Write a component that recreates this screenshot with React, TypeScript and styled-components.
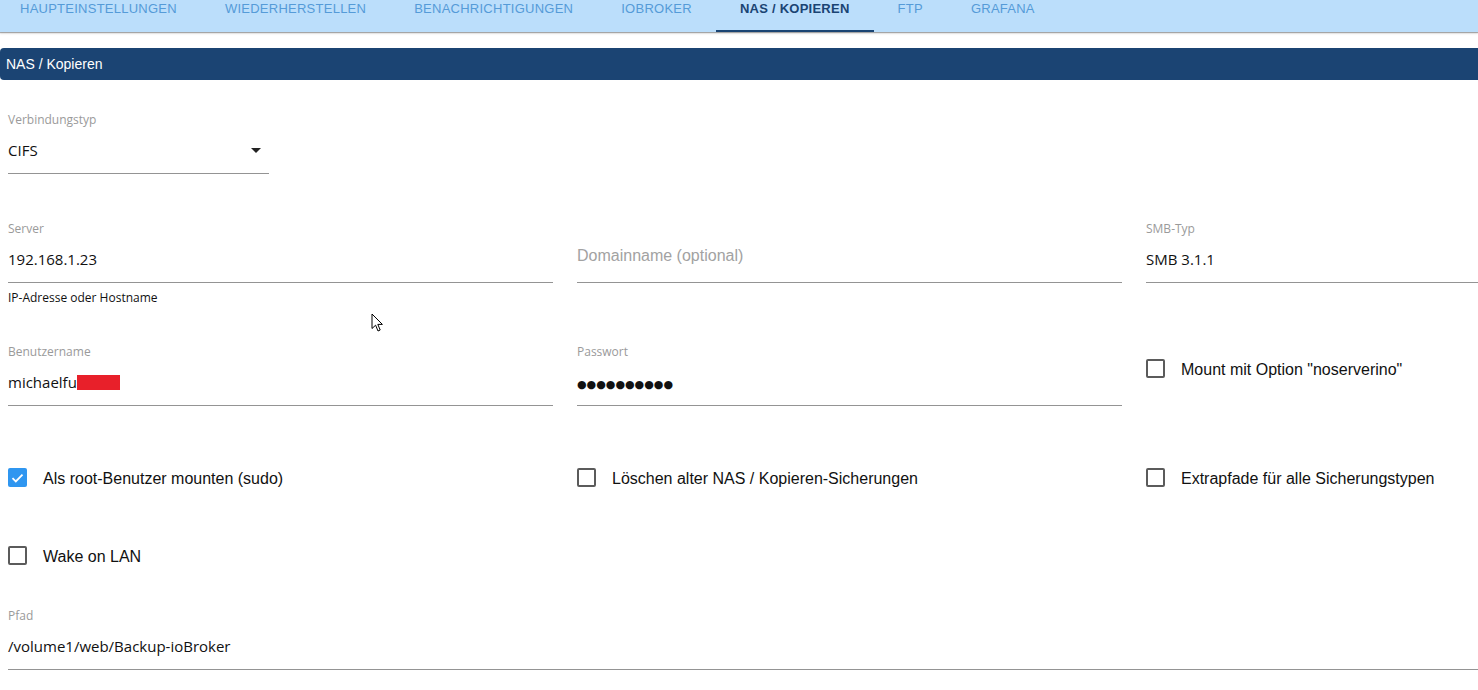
import * as React from 'react';
import styled, {createGlobalStyle} from 'styled-components';

/**
 * Page level reset
 */
const GlobalStyle = createGlobalStyle`
    html, body {
        margin: 0;
        padding: 0;
        background: #fff;
        overflow: hidden;
        font-family: "Liberation Sans", Arial, sans-serif;
    }
`;

const Page = styled.div`
    position: relative;
    width: 1478px;
    height: 690px;
    overflow: hidden;
`;

/* Tab bar at the top (scrolled up, only the lower part is visible) */
const TabBar = styled.div`
    height: 32px;
    background: #bbdefb;
    box-shadow: 0 1px 1px rgba(0, 0, 0, 0.3), 0 2px 2px rgba(0, 0, 0, 0.08);
    overflow: hidden;
`;

const TabList = styled.div`
    display: flex;
    margin-left: -4px;
    height: 32px;
`;

const Tab = styled.div<{$active?: boolean}>`
    position: relative;
    padding: 1px 24px 0;
    height: 31px;
    line-height: 16px;
    font-size: 13px;
    letter-spacing: 0.25px;
    text-transform: uppercase;
    white-space: nowrap;
    color: ${p => p.$active ? '#1a4473' : '#559bd8'};
    font-weight: ${p => p.$active ? 700 : 400};

    &::after {
        content: '';
        display: ${p => p.$active ? 'block' : 'none'};
        position: absolute;
        left: 0;
        right: 0;
        bottom: 0;
        height: 2px;
        background: #1a4473;
    }
`;

/* Dark section header */
const SectionHeader = styled.div`
    margin-top: 16px;
    height: 32px;
    line-height: 32px;
    padding-left: 6px;
    background: #1b4473;
    color: #fff;
    font-size: 14px;
    border-radius: 4px 0 0 4px;
`;

const Form = styled.div`
    padding: 31px 0 0 8px;
`;

const Row = styled.div<{$gap: number}>`
    display: grid;
    grid-template-columns: repeat(3, 545px);
    column-gap: 24px;
    margin-top: ${p => p.$gap}px;
`;

const Field = styled.div<{$width?: number; $span?: boolean}>`
    width: ${p => p.$width ? `${p.$width}px` : 'auto'};
    grid-column: ${p => p.$span ? '1 / -1' : 'auto'};
`;

const Label = styled.div`
    height: 16px;
    line-height: 17px;
    font-family: "Open Sans", sans-serif;
    font-size: 12px;
    color: #9a9a9a;
`;

const InputBox = styled.div<{$placeholder?: boolean}>`
    display: flex;
    align-items: center;
    height: 24px;
    padding: ${p => p.$placeholder ? '8px 0 14px' : '11px 0 11px'};
    border-bottom: 1px solid #949494;
    font-family: ${p => p.$placeholder ? '"Liberation Sans", Arial, sans-serif' : '"Open Sans", sans-serif'};
    font-size: ${p => p.$placeholder ? '16px' : '15px'};
    color: ${p => p.$placeholder ? '#a2a2a2' : '#111'};
    white-space: nowrap;
`;

const Value = styled.span`
    flex: 1;
`;

const Redacted = styled.span`
    display: inline-block;
    width: 43px;
    height: 15px;
    vertical-align: -2px;
    background: #e8202a;
`;

const Dots = styled.span`
    font-family: "DejaVu Sans", sans-serif;
    font-size: 11px;
    letter-spacing: 0;
`;

const ArrowDown = styled.span`
    width: 0;
    height: 0;
    margin-right: 8px;
    border-left: 5px solid transparent;
    border-right: 5px solid transparent;
    border-top: 5px solid #222;
`;

const Helper = styled.div`
    margin-top: 7px;
    line-height: 16px;
    font-family: "Open Sans", sans-serif;
    font-size: 12px;
    color: #111;
`;

const CheckRow = styled.label<{$offset?: number}>`
    display: flex;
    align-items: center;
    gap: 16px;
    height: 40px;
    margin-top: ${p => p.$offset ?? 0}px;
    padding-top: 2px;
    font-size: 16px;
    color: #111;
    white-space: nowrap;
`;

const Box = styled.span<{$checked?: boolean}>`
    box-sizing: border-box;
    width: 19px;
    height: 19px;
    border-radius: 2px;
    border: ${p => p.$checked ? 'none' : '2px solid #5b5b5b'};
    background: ${p => p.$checked ? '#2f96f0' : 'transparent'};
    display: flex;
    align-items: center;
    justify-content: center;
    margin-top: -3px;
`;

const Cursor = styled.svg`
    position: absolute;
    left: 371px;
    top: 313px;
`;

const Checkbox = ({checked, children, offset}: {checked?: boolean; children: React.ReactNode; offset?: number}) => (
    <CheckRow $offset={offset}>
        <Box $checked={checked}>
            {checked && (
                <svg width="13" height="10" viewBox="0 0 13 10">
                    <path d="M1.5 5.2 L4.8 8.4 L11.5 1.6" fill="none" stroke="#fff" strokeWidth="1.8" />
                </svg>
            )}
        </Box>
        {children}
    </CheckRow>
);

const tabs = ['Haupteinstellungen', 'Wiederherstellen', 'Benachrichtigungen', 'ioBroker', 'NAS / Kopieren', 'FTP', 'Grafana'];

export default function App() {
    return (
        <Page>
            <GlobalStyle />

            <TabBar>
                <TabList>
                    {tabs.map(t => (
                        <Tab key={t} $active={t === 'NAS / Kopieren'}>{t}</Tab>
                    ))}
                </TabList>
            </TabBar>

            <SectionHeader>NAS / Kopieren</SectionHeader>

            <Form>
                <Row $gap={0}>
                    <Field $width={261}>
                        <Label>Verbindungstyp</Label>
                        <InputBox>
                            <Value>CIFS</Value>
                            <ArrowDown />
                        </InputBox>
                    </Field>
                </Row>

                <Row $gap={46}>
                    <Field>
                        <Label>Server</Label>
                        <InputBox><Value>192.168.1.23</Value></InputBox>
                        <Helper>IP-Adresse oder Hostname</Helper>
                    </Field>
                    <Field>
                        <Label />
                        <InputBox $placeholder><Value>Domainname (optional)</Value></InputBox>
                    </Field>
                    <Field>
                        <Label>SMB-Typ</Label>
                        <InputBox><Value>SMB 3.1.1</Value></InputBox>
                    </Field>
                </Row>

                <Row $gap={37}>
                    <Field>
                        <Label>Benutzername</Label>
                        <InputBox><Value>michaelfu<Redacted /></Value></InputBox>
                    </Field>
                    <Field>
                        <Label>Passwort</Label>
                        <InputBox><Value><Dots>●●●●●●●●●●</Dots></Value></InputBox>
                    </Field>
                    <Checkbox offset={5}>Mount mit Option "noserverino"</Checkbox>
                </Row>

                <Row $gap={51}>
                    <Checkbox checked>Als root-Benutzer mounten (sudo)</Checkbox>
                    <Checkbox>Löschen alter NAS / Kopieren-Sicherungen</Checkbox>
                    <Checkbox>Extrapfade für alle Sicherungstypen</Checkbox>
                </Row>

                <Row $gap={36}>
                    <Checkbox>Wake on LAN</Checkbox>
                </Row>

                <Row $gap={30}>
                    <Field $span>
                        <Label>Pfad</Label>
                        <InputBox><Value>/volume1/web/Backup-ioBroker</Value></InputBox>
                    </Field>
                </Row>
            </Form>

            <Cursor width="12" height="20" viewBox="0 0 12 20">
                <path d="M1 1 L1 15.5 L4.6 12.2 L7 18 L9.2 17 L6.8 11.4 L11.4 11.4 Z" fill="#fff" stroke="#000" strokeWidth="1" strokeLinejoin="round" />
            </Cursor>
        </Page>
    );
}
